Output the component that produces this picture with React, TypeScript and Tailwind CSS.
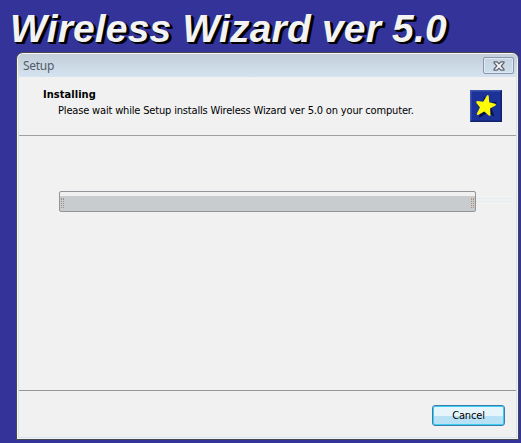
function CloseButton() {
  return (
    <button
      aria-label="Close"
      className="mt-[3px] flex h-[17px] w-[31px] items-center justify-center rounded-[2px] border border-[#8996ad] bg-linear-to-b from-[#c7d3e0] to-[#cfdfec] shadow-[inset_0_0_0_1px_#dce8f2]"
    >
      <svg width="12" height="10" viewBox="0 0 12 10">
        <path
          d="M1 .8h3.2L6 2.8 7.8.8H11v1L8.2 5 11 8.2v1H7.8L6 7.2 4.2 9.2H1v-1L3.8 5 1 1.8z"
          fill="#f5f5f5"
          stroke="#5c6270"
          strokeWidth="1.2"
          strokeLinejoin="round"
        />
      </svg>
    </button>
  );
}

function StarIcon() {
  return (
    <svg width="32" height="32" viewBox="0 0 32 32">
      <path d="M0 0h32v32H0z" fill="#1c3299" />
      <path d="M0 0h32l-1.5 1.5h-29v29L0 32z" fill="#3c55ab" />
      <path d="M32 0v32H0l1.5-1.5h29v-29z" fill="#13226f" />
      <path d="M12.7 5l4 6.8 9.3-1.2-5.6 6.6 2.8 8.1-7.1-3.7-8.6 5.2 2.2-8.6-4-5.1 6.5-.6z" fill="#081344" transform="translate(1.2 1.2)" />
      <path d="M17 5.4q1.3-.8 1.7.5l.5 6.3 6 1.6q1.4.8.3 1.7l-5.4 3.1.4 6.3q-.5 1.4-1.7.7l-4.5-4-6.2 3.3q-1.6.2-1.2-1.3l3-6.2-3.6-4.7q-.4-1.5 1-1.6l5.9.7z" fill="#fffb05" />
    </svg>
  );
}

export default function App() {
  return (
    <div className="h-[443px] w-[521px] overflow-hidden bg-[#333399] text-[11px] tracking-[-0.17px] text-black [font-family:Tahoma,'DejaVu_Sans_Condensed','DejaVu_Sans',sans-serif]">
      <h1 className="h-[52px] pl-[10px] pt-[7px] font-['Liberation_Sans',Arial,sans-serif] text-[39px] leading-[44px] font-bold tracking-[0.17px] whitespace-nowrap text-[#f3f3f3] italic [text-shadow:1px_1px_0_#000,2px_1px_0_#000,2px_2px_0_#000,3px_2px_0_#000]">
        Wireless Wizard ver 5.0
      </h1>
      <div className="ml-[16px] flex h-[388px] w-[503px] flex-col rounded-t-[7px] border border-[#484848] bg-[#d5e3f0] px-[2px] pb-[2px] shadow-[inset_1px_1px_0_#f5f7f9,inset_-1px_-1px_0_#edf4fa]">
        <header className="-mx-px mt-px flex h-[23px] shrink-0 justify-between rounded-t-[5px] bg-linear-to-b from-[#c3cdd8] via-[#cbd9e5] to-[#d5e3f0] pr-[3px] pl-[5px]">
          <span className="pt-[4px] text-[12px] leading-[15px] tracking-[-0.3px] text-[#535b67] [font-family:'Noto_Sans',sans-serif]">Setup</span>
          <CloseButton />
        </header>
        <main className="flex min-h-0 flex-1 flex-col bg-[#f1f1f1]">
          <section className="flex h-[59px] shrink-0 justify-between border-b border-[#a0a0a0] pr-[14px] pl-[24px]">
            <div className="pt-[10px] leading-[15px] whitespace-nowrap">
              <h2 className="text-[11px] font-bold tracking-[0.05px]">Installing</h2>
              <p className="pt-px pl-[15px]">Please wait while Setup installs Wireless Wizard ver 5.0 on your computer.</p>
            </div>
            <div className="pt-[13px]"><StarIcon /></div>
          </section>
          <section className="flex flex-1 pt-[55px] pl-[40px]">
            <div className="flex h-[21px] w-[417px] shrink-0 items-center justify-between rounded-[2px] border border-[#929497] bg-linear-to-b from-[#f0f0f0] from-[20%] to-[#c9cccf] to-[21%] px-[1px]">
              <span className="mt-[3px] h-[10px] w-[3px] border-x border-dotted border-[#a28d87]" />
              <span className="mt-[3px] h-[10px] w-[3px] border-x border-dotted border-[#b79078]" />
            </div>
            <div className="mt-[7px] mr-[2px] h-[4px] flex-1 border-y border-dotted border-[#d4eef1]" />
          </section>
          <footer className="flex h-[47px] shrink-0 justify-end border-t border-[#969696] pt-[14px] pr-[11px]">
            <button className="h-[21px] w-[73px] rounded-[3px] border border-[#3d7da8] bg-linear-to-b from-[#e6f5fc] from-50% to-[#b9e1f6] to-51% pt-px text-center leading-[18px] tracking-[-0.17px] shadow-[inset_0_0_0_1px_#38cef5]">
              Cancel
            </button>
          </footer>
        </main>
      </div>
    </div>
  );
}
